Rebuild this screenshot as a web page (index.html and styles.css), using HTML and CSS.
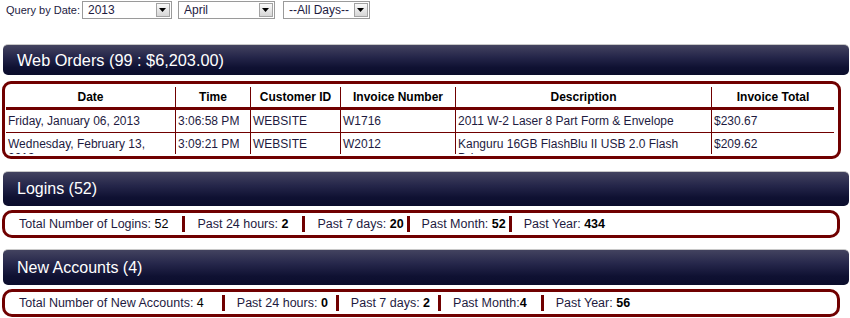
FILE: index.html
```html
<!DOCTYPE html>
<html lang="en">

<head>
    <meta charset="UTF-8">
    <title>Dashboard</title>
    <link rel="stylesheet" href="styles.css">
</head>

<body>
    <div class="query">
        <span class="query-label">Query by Date:</span>
        <div class="select year">
            <select><option>2013</option></select>
            <span class="select-btn"><svg width="7" height="4" viewBox="0 0 7 4"><polygon points="0,0 7,0 3.5,4" fill="#000"/></svg></span>
        </div>
        <div class="select month">
            <select><option>April</option></select>
            <span class="select-btn"><svg width="7" height="4" viewBox="0 0 7 4"><polygon points="0,0 7,0 3.5,4" fill="#000"/></svg></span>
        </div>
        <div class="select days">
            <select><option>--All Days--</option></select>
            <span class="select-btn"><svg width="7" height="4" viewBox="0 0 7 4"><polygon points="0,0 7,0 3.5,4" fill="#000"/></svg></span>
        </div>
    </div>

    <div class="panel-head orders-head">Web Orders (99 : $6,203.00)</div>
    <div class="orders-box">
        <div class="table-wrap">
            <table class="orders">
                <colgroup>
                    <col style="width: 169px">
                    <col style="width: 75px">
                    <col style="width: 90px">
                    <col style="width: 115px">
                    <col style="width: 256px">
                    <col style="width: 123px">
                </colgroup>
                <tr>
                    <th>Date</th>
                    <th>Time</th>
                    <th>Customer ID</th>
                    <th>Invoice Number</th>
                    <th>Description</th>
                    <th>Invoice Total</th>
                </tr>
                <tr class="first-row">
                    <td>Friday, January 06, 2013</td>
                    <td>3:06:58 PM</td>
                    <td>WEBSITE</td>
                    <td>W1716</td>
                    <td>2011 W-2 Laser 8 Part Form &amp; Envelope</td>
                    <td>$230.67</td>
                </tr>
                <tr>
                    <td>Wednesday, February 13, 2013</td>
                    <td>3:09:21 PM</td>
                    <td>WEBSITE</td>
                    <td>W2012</td>
                    <td>Kanguru 16GB FlashBlu II USB 2.0 Flash Drive</td>
                    <td>$209.62</td>
                </tr>
            </table>
        </div>
    </div>

    <div class="panel-head logins-head">Logins (52)</div>
    <div class="stats">
        <span class="stat">Total Number of Logins: <span class="num">52</span></span>
        <span class="stat">Past 24 hours: <b>2</b></span>
        <span class="stat short">Past 7 days: <b>20</b></span>
        <span class="stat short">Past Month: <b>52</b></span>
        <span class="stat">Past Year: <b>434</b></span>
    </div>

    <div class="panel-head accounts-head">New Accounts (4)</div>
    <div class="stats">
        <span class="stat lead">Total Number of New Accounts: <span class="num">4</span></span>
        <span class="stat tight">Past 24 hours: <b>0</b></span>
        <span class="stat tight">Past 7 days: <b>2</b></span>
        <span class="stat">Past Month:<b>4</b></span>
        <span class="stat">Past Year: <b>56</b></span>
    </div>
</body>

</html>
```

FILE: styles.css
```css
body {
    font-family: "Liberation Sans", Arial, sans-serif;
    font-size: 12px;
    margin: 0;
    padding: 0;
    background: #fff;
    color: #1e1b3f;
}

/* Query row */
.query {
    display: flex;
    align-items: center;
    height: 18px;
    padding: 1px 0 0 6px;
}

.query-label {
    font-size: 11px;
    margin-right: 2px;
    color: #1e1b3f;
}

.select {
    position: relative;
    height: 18px;
    margin-right: 6px;
}

.select.year {
    width: 90px;
}

.select.month {
    width: 97px;
    margin-right: 8px;
}

.select.days {
    width: 87px;
}

.select select {
    -webkit-appearance: none;
    appearance: none;
    width: 100%;
    height: 100%;
    margin: 0;
    padding: 0 0 0 5px;
    border: 1px solid #9a9a9a;
    border-radius: 0;
    background: #fff;
    font-family: "Liberation Sans", Arial, sans-serif;
    font-size: 12px;
    color: #1e1b3f;
    outline: none;
}

.select-btn {
    position: absolute;
    top: 2px;
    right: 2px;
    width: 12px;
    height: 12px;
    border: 1px solid #a3a3a3;
    background: linear-gradient(#fafafa, #d6d6d6);
    display: flex;
    justify-content: center;
    align-items: center;
    pointer-events: none;
}

/* Section headers */
.panel-head {
    box-sizing: border-box;
    margin: 0 1px 0 3px;
    padding-left: 14px;
    display: flex;
    align-items: center;
    color: #fff;
    font-size: 16px;
    border-radius: 5px;
    border-top: 1px solid #c8c8c8;
    background: linear-gradient(to bottom, #43435f 0%, #25264a 40%, #0f1132 75%, #0b0d2c 100%);
}

.orders-head {
    height: 31px;
    margin-top: 25px;
    font-size: 16.3px;
}

.logins-head {
    height: 35px;
    margin-top: 12px;
}

.accounts-head {
    height: 36px;
    margin-top: 11px;
}

/* Orders table */
.orders-box {
    box-sizing: border-box;
    height: 78px;
    margin: 6px 9px 0 2px;
    padding: 3px 4px 2px 1px;
    border: 3px solid #700000;
    border-radius: 9px;
}

.table-wrap {
    height: 67px;
    overflow: hidden;
}

.orders {
    width: 828px;
    table-layout: fixed;
    border-collapse: separate;
    border-spacing: 0;
}

.orders th {
    height: 20px;
    padding: 0;
    line-height: 20px;
    font-size: 12px;
    font-weight: bold;
    color: #000;
    text-align: center;
    border-bottom: 3px solid #700000;
}

.orders td {
    padding: 4px 2px;
    line-height: 14px;
    font-size: 12px;
    color: #1e1b3f;
    vertical-align: top;
    white-space: normal;
    overflow: hidden;
}

.orders th + th,
.orders td + td {
    border-left: 1px solid #700000;
}

.orders .first-row td {
    height: 14px;
    border-bottom: 1px solid #700000;
    white-space: nowrap;
}

/* Stat strips */
.stats {
    box-sizing: border-box;
    height: 28px;
    margin: 4px 10px 0 2px;
    padding-left: 14px;
    display: flex;
    align-items: center;
    border: 3px solid #700000;
    border-radius: 10px;
    font-size: 12.5px;
    color: #1e1b3f;
}

.stat {
    line-height: 16px;
    padding: 0 14px 0 12px;
    border-left: 3px solid #700000;
    white-space: nowrap;
}

.stat:first-child {
    border-left: none;
    padding-left: 0;
}

.stat.short {
    padding-right: 3px;
}

.stat.lead {
    padding-right: 18px;
}

.stat.tight {
    padding-right: 8px;
}

.stat b {
    color: #000;
}

.stat .num {
    color: #000;
}
```
